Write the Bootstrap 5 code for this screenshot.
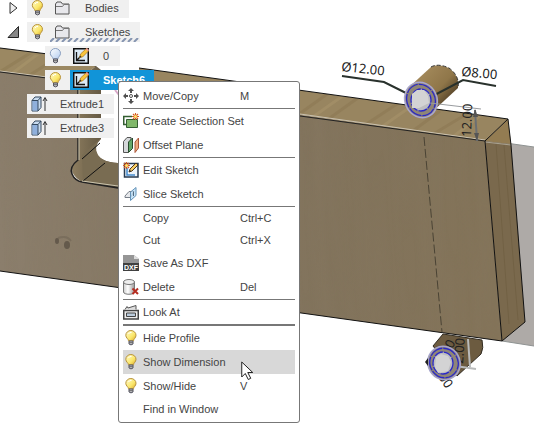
<!DOCTYPE html>
<html lang="en">
<head>
<meta charset="utf-8">
<meta name="viewport" content="width=device-width, initial-scale=1">
<title>Sketch context menu</title>
<link href="https://cdn.jsdelivr.net/npm/bootstrap@5.3.0/dist/css/bootstrap.min.css" rel="stylesheet">
<style>
body{font-family:"Liberation Sans",Arial,sans-serif;font-size:11px;line-height:16px;color:#444;background:#fff}
.workspace{min-height:100vh}
.scene{z-index:0}
.tree{z-index:1;gap:4px;margin-top:-2px}
.tree-row{height:20px;gap:9px;padding-left:9px}
.tree-row.leaf{padding-left:27px}
.tree-row.deep{padding-left:45px}
.chip{background:#f0f0f0;height:20px;padding:0 10px 0 4px}
.chip .tree-label{margin-left:12px}
.folder-chip{gap:10px}
.toggle{width:9px}
.chip-sketch{background:#f0f0f0;height:20px;padding:0 3px 0 4px}
.name-chip{height:20px;padding:0 11px 0 3px;background:#f0f0f0;gap:14px}
.name-chip.active{background:#1194d8;color:#fff;font-weight:bold;padding-right:9px}
.bare{background:none;border:0;padding:0;color:inherit;font:inherit;line-height:16px}
.bare svg,.chip svg,.name-chip svg{display:block}
.ctx{left:118px;top:81px;width:182px;padding:2px 4px;background:#fff;border:1px solid #777;border-radius:3px;z-index:2}
.ctx-item{height:24px;padding:0;gap:4px;border:0;background:#fff;color:#444;font:inherit;width:100%;text-align:left}
.ctx-item.short{height:22px}
.ctx-item:hover,.ctx-item.hot{background:#d8d8d8}
.ctx-label{width:93px;white-space:nowrap}
.ctx-icon{width:16px;height:16px;flex:none}
.rule{height:1px;background:#777;margin:0;border:0;opacity:1}
.rule.thick{height:2px}
.pointer{left:241px;top:361px;z-index:3;pointer-events:none}
.dim{font:13px "Noto Sans","Open Sans",sans-serif;fill:#222}
</style>
<script src="https://cdn.jsdelivr.net/npm/bootstrap@5.3.0/dist/js/bootstrap.bundle.min.js"></script>
</head>
<body>
<svg width="0" height="0" class="position-absolute" aria-hidden="true">
<defs>
<linearGradient id="glow" x2="1" y2="1"><stop stop-color="#fffbd0"/><stop offset=".6" stop-color="#fbe76a"/><stop offset="1" stop-color="#d9a52c"/></linearGradient>
<linearGradient id="cold" x2="1" y2="1"><stop stop-color="#fff"/><stop offset="1" stop-color="#b4cdf0"/></linearGradient>
<linearGradient id="metal"><stop stop-color="#ccc"/><stop offset=".4" stop-color="#fff"/><stop offset="1" stop-color="#999"/></linearGradient>
<symbol id="bulb" viewBox="0 0 13 16"><path d="M4 10.800C4 8.800 1.300 8 1.300 5.300a5.100 4.800 0 0 1 10.200 0C11.500 8 9 8.800 9 10.800Z" fill="url(#glow)" stroke="#b8933a"/><path d="M4 4q1-2 3-1.500" stroke="#fff" fill="none"/><path d="M4.500 11h4v3q-2 1.800-4 0Z" fill="#c4c4c8" stroke="#555560"/><path d="M4.500 12.700h4" stroke="#666"/></symbol>
<symbol id="bulb-off" viewBox="0 0 13 16"><path d="M4 10.800C4 8.800 1.300 8 1.300 5.300a5.100 4.800 0 0 1 10.200 0C11.500 8 9 8.800 9 10.800Z" fill="url(#cold)" stroke="#8a9fc0"/><path d="M4.500 11h4v3q-2 1.800-4 0Z" fill="#c4c4c8" stroke="#555560"/><path d="M4.500 12.700h4" stroke="#666"/></symbol>
<symbol id="folder" viewBox="0 0 17 14"><path d="M1.500 13V3L3 1h4l1.500 2H15v10Z" fill="#e8e8ec" stroke="#555"/><path d="M2 5.500h6.500L10 3.500h5" fill="none" stroke="#777"/></symbol>
<symbol id="sketch" viewBox="0 0 16 16"><rect x=".75" y=".75" width="14.500" height="14.500" fill="#dbe9f5" stroke="#111" stroke-width="1.500"/><path d="M3.500 4v8.500H12M4 12l4-4" fill="none" stroke="#111" stroke-width="1.300"/><path d="m6.500 9.500 1-3.500 6-5.500 2 2.500-6 6Z" fill="#f9c53c" stroke="#a87016" stroke-width=".7"/><path d="m12.500 1.200 1.500-1.200 2 2-1 1.500Z" fill="#e99a90"/><path d="m6.500 9.500.6-2 1.500 1.500Z" fill="#333"/></symbol>
<symbol id="extrude" viewBox="0 0 17 16"><path d="M1 4.500 4 1h6v10.500l-3 3.500H1Z" fill="#c9dcf0" stroke="#34495f"/><path d="M1.500 5H7v9.500H1.500Z" fill="#8fb0dc"/><path d="M1 4.500h6L10 1M7 4.500V15" fill="none" stroke="#34495f"/><path d="M14 15V2M12 5l2-3.500L16 5" fill="none" stroke="#333"/></symbol>
<symbol id="spark" viewBox="0 0 7 7"><path d="M3.500 0v7M0 3.500h7M1 1l5 5M6 1 1 6" stroke="#d55b21" stroke-width="1.100"/><circle cx="3.500" cy="3.500" r="1.500" fill="#ffe66b"/></symbol>
</defs>
</svg>

<main class="workspace position-relative overflow-hidden">
<svg class="scene position-absolute top-0 start-0 w-100 h-100" viewBox="0 0 534 426" preserveAspectRatio="xMinYMin slice" role="img" aria-label="Wooden board with two dowels">
<defs>
<filter id="grain" x="0" y="0" width="1" height="1"><feTurbulence type="fractalNoise" baseFrequency=".06 .005" numOctaves="2" seed="4"/><feColorMatrix values="0 0 0 0 .25  0 0 0 0 .2  0 0 0 0 .13  .9 0 0 0 -.32"/></filter>
<linearGradient id="face"><stop stop-color="#8b7e6c"/><stop offset=".5" stop-color="#82745e"/><stop offset="1" stop-color="#837358"/></linearGradient>
<linearGradient id="dowel" gradientUnits="userSpaceOnUse" x1="420" y1="78" x2="446" y2="102"><stop stop-color="#a08658"/><stop offset=".6" stop-color="#8f7649"/><stop offset="1" stop-color="#5b482c"/></linearGradient>
<linearGradient id="bend" x2="1"><stop stop-color="#8d7d5f"/><stop offset="1" stop-color="#4e4534"/></linearGradient>
<clipPath id="front"><path d="M0 71 78 81V160Q70 168 73 176L81 182 118 187V112L139 90 485 140 502 341 0 271Z"/></clipPath>
<clipPath id="top"><path d="M139 68 508 119 485 141 139 92ZM0 48 96 66 78 81 0 71Z"/></clipPath>
</defs>
<path d="M485 140 534 147V346L502 341Z" fill="#aeaaa7"/>
<path d="M485 140 534 147M502 341 534 346" stroke="#8f9392"/>
<path d="M0 71 78 81V160Q70 168 73 176L81 182 118 187V90L485 140 502 341 0 271Z" fill="url(#face)"/>
<g clip-path="url(#front)"><g transform="skewX(3)"><rect x="-20" width="560" height="350" filter="url(#grain)" opacity=".6"/></g><ellipse cx="57" cy="241" rx="2" ry="3" fill="#40382f" opacity=".5"/><ellipse cx="67" cy="245" rx="3" ry="4" fill="#40382f" opacity=".5"/><path d="M58 238q9-3 13 3" fill="none" stroke="#51483c" opacity=".25" stroke-width="2"/></g>
<path d="M139 68 508 119 485 141 139 92Z" fill="#988560"/>
<path d="M0 48 48 54 96 66 78 81 0 71Z" fill="#9b8862"/>
<g clip-path="url(#top)" fill="none" stroke="#806d48" opacity=".3" stroke-width="3"><path d="m-5 75 40-25M25 78l35-22M295 117l35-25M327 120l35-25M365 125l38-25M410 133l30-22M430 136l40-24"/><path d="m10 75 32-24M310 119l34-24M380 128l36-25M450 139l30-23" stroke="#b5a176"/></g>
<path d="M78 81 96 66 101 70V139Q93 146 97 154 101 162 118 163V188L82 182Q69 174 73 165L78 160Z" fill="url(#bend)"/>
<path d="M82 155 101 138Q93 147 98 155 102 162 118 163V186L83 181Z" fill="#796c52"/>
<path d="m82 159 18-16M83 181l22-18" stroke="#111"/>
<path d="M78 81v79q-9 7-6 14 3 7 10 8l36 6" fill="none" stroke="#222" stroke-width="1.500"/>
<path d="M79 82v78M82 181l36 5" fill="none" stroke="#cbc4ae"/>
<path d="M508 119 511 144 485 141Z" fill="#937c52"/>
<path d="M485 141 511 144 525 322 502 341Z" fill="#7a694d"/>
<path d="m496 144 13 180M504 145l14 175" stroke="#665638" opacity=".4"/>
<path d="M0 71 78 81M300 114 485 140" stroke="#c9c1b0"/>
<path d="m0 72 78 10M300 116l185 25" stroke="#222"/>
<path d="M485 142 511 145" stroke="#aaa393"/>
<path d="M0 48 48 54 96 66M139 68 508 119 511 145 525 322 502 341 0 271M508 119 485 141 502 341" fill="none" stroke="#111"/>
<path d="m424 137 18 195" stroke="#4a4334" stroke-dasharray="9 3"/>
<path d="m115 90 4 5" stroke="#d8a8c8" stroke-width="2"/>
<!-- upper dowel -->
<path d="M407 89 431 67Q438 63 449 68 460 76 458 88L432 112Z" fill="url(#dowel)"/>
<path d="M431 67Q438 63 449 68 460 76 458 88" fill="none" stroke="#333" stroke-dasharray="4 2"/>
<path d="M342 76 384 82 408 94M496 86 463 80 429 98" fill="none" stroke="#29312c" stroke-width="2"/>
<ellipse cx="421" cy="100" rx="16" ry="18" transform="rotate(-25 421 100)" fill="#8f8677" stroke="#aaa7cf" stroke-width="1.500"/>
<ellipse cx="421" cy="100" rx="14" ry="16" transform="rotate(-25 421 100)" fill="none" stroke="#2a28c8" stroke-width="1.300" stroke-dasharray="14 1"/>
<ellipse cx="421" cy="100" rx="10" ry="11" fill="#bdbdc0" stroke="#2a28c8" stroke-width="1.300" stroke-dasharray="9 1"/>
<path d="m412 94 5-4h7l4 6 1 7-10 5h-7Z" fill="#d3d3d4"/>
<path d="m430 103 51 6" stroke="#999c9f"/><path d="m475 110 2 31" stroke="#6b6f72" stroke-width="2"/><path d="m475 109-2 8h5ZM477 141l-3-8h5Z" fill="#555"/>
<text class="dim" transform="translate(341 71) rotate(6)">Ø12.00</text>
<text class="dim" transform="translate(461 76) rotate(5)">Ø8.00</text>
<text class="dim" transform="translate(471 137) rotate(-88)">12.00</text>
<!-- lower dowel -->
<path d="m443 334 39 6q2 8-1 14l-24 22-24-30Z" fill="#6c5b40" stroke="#312b21"/>
<path d="m468 339 2 28M455 366l21 3" stroke="#b9bbbb" stroke-width="2"/>
<text class="dim" transform="translate(447 359) rotate(-62)">.00</text>
<text class="dim" transform="translate(463 364) rotate(-86)">2.00</text>
<text class="dim" transform="translate(436 374) rotate(56)">.00</text>
<ellipse cx="444" cy="363" rx="16" ry="17" transform="rotate(-30 444 363)" fill="#8f8677" stroke="#a6a4cb" stroke-width="1.500"/>
<ellipse cx="444" cy="363" rx="14" ry="15" transform="rotate(-30 444 363)" fill="none" stroke="#2a28c8" stroke-width="1.300" stroke-dasharray="14 1"/>
<ellipse cx="443" cy="363" rx="10" ry="11" fill="#bdbdc0" stroke="#2a28c8" stroke-width="1.300" stroke-dasharray="9 1"/>
<path d="m436 357 5-3 7 2 3 6-3 9-10 2-3-6Z" fill="#d3d3d4"/>
<path d="m428 358-3 4 3 4Z" fill="#222"/>
</svg>

<ul class="tree list-unstyled mb-0 d-flex flex-column position-relative">
<li class="tree-row d-flex align-items-center">
<button class="bare toggle" aria-label="Expand Bodies"><svg width="9" height="14"><path d="M1 1.500 8 7 1 12.500Z" fill="#eee" stroke="#333"/></svg></button>
<div class="chip folder-chip d-flex align-items-center"><svg width="13" height="16"><use href="#bulb"/></svg><svg width="17" height="14"><use href="#folder"/></svg><span class="ms-1">Bodies</span></div></li>
<li class="tree-row d-flex align-items-center">
<button class="bare toggle" aria-label="Collapse Sketches"><svg width="11" height="12" class="overflow-visible"><path d="M9.500 .5v11H-1Z" fill="#888" stroke="#222"/></svg></button>
<div class="chip folder-chip d-flex align-items-center position-relative"><svg width="13" height="16"><use href="#bulb"/></svg><svg width="17" height="14"><use href="#folder"/></svg><span class="ms-1">Sketches</span><svg class="position-absolute bottom-0 end-0" width="90" height="4"><path d="m0 4 4-4m2 4 4-4m2 4 4-4m2 4 4-4m2 4 4-4m2 4 4-4m2 4 4-4m2 4 4-4m2 4 4-4m2 4 4-4m2 4 4-4m2 4 4-4m2 4 4-4m2 4 4-4m2 4 4-4" stroke="#8594b0" stroke-width="2"/></svg></div></li>
<li class="tree-row deep d-flex align-items-center gap-0"><div class="chip-sketch d-flex align-items-center"><svg width="18" height="16" viewBox="0 0 18 16"><use href="#bulb-off" width="13" height="16"/></svg></div><div class="name-chip d-flex align-items-center"><svg width="16" height="16"><use href="#sketch"/></svg><span>0</span></div></li>
<li class="tree-row deep d-flex align-items-center gap-0"><div class="chip-sketch d-flex align-items-center"><svg width="18" height="16" viewBox="0 0 18 16"><use href="#bulb" width="13" height="16"/></svg></div><div class="name-chip active d-flex align-items-center"><svg width="16" height="16"><use href="#sketch"/></svg><span>Sketch6</span></div></li>
<li class="tree-row leaf d-flex align-items-center"><div class="chip d-flex align-items-center"><svg width="17" height="16"><use href="#extrude"/></svg><span class="tree-label">Extrude1</span></div></li>
<li class="tree-row leaf d-flex align-items-center"><div class="chip d-flex align-items-center"><svg width="17" height="16"><use href="#extrude"/></svg><span class="tree-label">Extrude3</span></div></li>
</ul>

<div class="ctx position-absolute" role="menu">
<button class="ctx-item d-flex align-items-center" role="menuitem"><svg class="ctx-icon" viewBox="0 0 16 16"><path d="m8 0 3 3H9v2H7V3H5ZM8 16l3-3H9v-2H7v2H5ZM0 8l3-3v2h2v2H3v2ZM16 8l-3-3v2h-2v2h2v2Z" fill="#505050"/><circle cx="8" cy="8" r="1.500" fill="#fff" stroke="#505050"/></svg><span class="ctx-label">Move/Copy</span><span>M</span></button>
<hr class="rule">
<button class="ctx-item d-flex align-items-center" role="menuitem"><svg class="ctx-icon" viewBox="0 0 16 16"><path d="M3 11.500H.75v-8H9" fill="none" stroke="#345f32" stroke-width="1.500"/><path d="M3.500 6.500h11v8h-11Z" fill="#80b86a" stroke="#345f32"/><use href="#spark" x="9" width="7" height="7"/></svg><span class="ctx-label">Create Selection Set</span></button>
<button class="ctx-item d-flex align-items-center" role="menuitem"><svg class="ctx-icon" viewBox="0 0 16 16"><path d="M.5 4.500 4 .5h4v11l-3 4H.5Z" fill="#d5d7da" stroke="#555"/><path d="m5.500 5 4-4v10.500l-4 4Z" fill="#65a76a" stroke="#294a2c"/><path d="m12 5 3.500-4v10L12 15.500Z" fill="#f1aa80" stroke="#a95638"/></svg><span class="ctx-label">Offset Plane</span></button>
<hr class="rule">
<button class="ctx-item d-flex align-items-center" role="menuitem"><svg class="ctx-icon" viewBox="0 0 16 16"><rect x="1.500" y="1.500" width="13.500" height="13.500" fill="#edf4fb" stroke="#263a50" stroke-width="1.500"/><path d="M4 6v7h8" fill="none" stroke="#458acd" stroke-width="1.500"/><path d="m6 10 1-3 6-6 2 2-6 6Z" fill="#f6cd63" stroke="#4e3920"/><path d="m6 10 1-2 1 1Z" fill="#222"/><use href="#spark" width="7" height="7"/></svg><span class="ctx-label">Edit Sketch</span></button>
<button class="ctx-item d-flex align-items-center" role="menuitem"><svg class="ctx-icon" viewBox="0 0 16 16"><path d="m2 10 4-4.500h5L7.500 11.500H2Z" fill="#e6e8eb" stroke="#777e88"/><path d="m7.500 6 5.500-4.500v8l-5.500 5Z" fill="#b8dcf7" fill-opacity=".75" stroke="#6392b8"/><path d="M10.500 5.500v4.500" stroke="#536b80"/></svg><span class="ctx-label">Slice Sketch</span></button>
<hr class="rule">
<button class="ctx-item short d-flex align-items-center" role="menuitem"><span class="ctx-icon"></span><span class="ctx-label">Copy</span><span>Ctrl+C</span></button>
<button class="ctx-item short d-flex align-items-center" role="menuitem"><span class="ctx-icon"></span><span class="ctx-label">Cut</span><span>Ctrl+X</span></button>
<button class="ctx-item d-flex align-items-center" role="menuitem"><svg class="ctx-icon" viewBox="0 0 16 16"><path d="M0 0h11l5 4v12H0Z" fill="#969696"/><path d="M0 8h16v8H0Z" fill="#404040"/><path d="M11 0v4h5Z" fill="#ddd"/><text x="1" y="15" font-family="Liberation Sans" font-size="7" font-weight="bold" fill="#fff">DXF</text></svg><span class="ctx-label">Save As DXF</span></button>
<button class="ctx-item d-flex align-items-center" role="menuitem"><svg class="ctx-icon" viewBox="0 0 16 16"><path d="M.5 3v10c0 3 11 3 11 0V3Z" fill="url(#metal)" stroke="#777"/><ellipse cx="6" cy="3" rx="5.500" ry="2.500" fill="#eee" stroke="#777"/><path d="m9.500 9.500 5.500 5.500M15 9.500 9.500 15" stroke="#b52e22" stroke-width="2"/></svg><span class="ctx-label">Delete</span><span>Del</span></button>
<hr class="rule">
<button class="ctx-item d-flex align-items-center" role="menuitem"><svg class="ctx-icon" viewBox="0 0 16 16"><path d="M.75 6.500h14.500v8.500H.75Z" fill="#eee" stroke="#444" stroke-width="1.500"/><path d="M3.500 9h9v3.500h-9Z" fill="#bcd" stroke="#444"/><path d="m2 5.500 2-3L5 4l8-2.500v4" fill="#ddd" stroke="#555"/></svg><span class="ctx-label">Look At</span></button>
<hr class="rule thick">
<button class="ctx-item d-flex align-items-center" role="menuitem"><svg class="ctx-icon"><use href="#bulb"/></svg><span class="ctx-label">Hide Profile</span></button>
<button class="ctx-item hot d-flex align-items-center" role="menuitem"><svg class="ctx-icon"><use href="#bulb"/></svg><span class="ctx-label">Show Dimension</span></button>
<button class="ctx-item d-flex align-items-center" role="menuitem"><svg class="ctx-icon"><use href="#bulb"/></svg><span class="ctx-label">Show/Hide</span><span>V</span></button>
<button class="ctx-item short d-flex align-items-center" role="menuitem"><span class="ctx-icon"></span><span class="ctx-label">Find in Window</span></button>
</div>
<svg class="pointer position-absolute" width="13" height="20" aria-hidden="true"><path d="M.75 1v15l3.500-3.500 3 6 2.500-1.200-3-5.800h5Z" fill="#fff" stroke="#222"/></svg>
</main>
</body>
</html>
